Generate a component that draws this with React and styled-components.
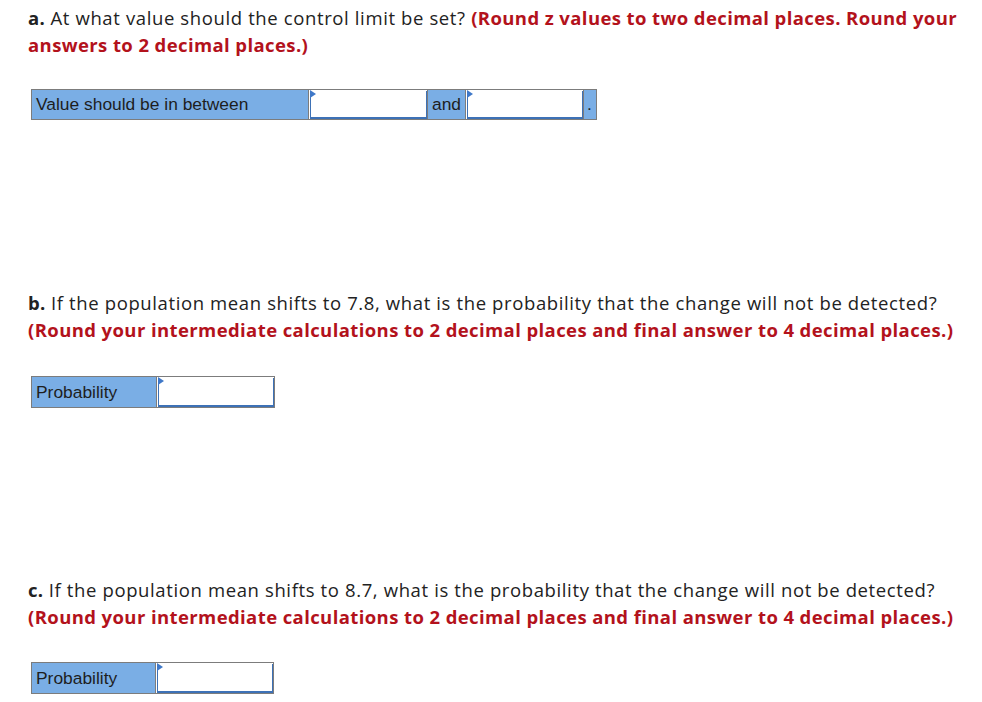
import styled, { createGlobalStyle } from "styled-components";

const GlobalStyle = createGlobalStyle`
  body {
    margin: 0;
    background: #ffffff;
  }
`;

const Page = styled.div`
  padding: 5px 0 0 28px;
  width: 954px;
`;

const Section = styled.section`
  margin-bottom: ${(p) => p.gap}px;
`;

const Question = styled.p`
  margin: 0 0 ${(p) => p.below ?? 32}px 0;
  font-family: "Open Sans", Lato, sans-serif;
  font-size: 18.5px;
  line-height: 26.5px;
  letter-spacing: 0.62px;
  color: #222222;
  white-space: nowrap;
`;

const Letter = styled.b`
  font-weight: 700;
  letter-spacing: 0.3px;
`;

const Hint = styled.span`
  font-weight: 700;
  letter-spacing: 0.4px;
  color: #b3121c;
`;

const Table = styled.div`
  display: flex;
  margin-left: 3px;
  width: max-content;
  border: 1px solid #7c7c7c;
  font-family: "Liberation Sans", Arial, sans-serif;
  font-size: 17.4px;
  color: #1e1e1e;
`;

const Label = styled.div`
  width: ${(p) => p.w}px;
  height: ${(p) => p.h ?? 29}px;
  box-sizing: border-box;
  padding: 0 ${(p) => p.pad ?? 4}px;
  display: flex;
  align-items: center;
  background: #7aaee5;
  border-left: ${(p) => (p.first ? "none" : "1px solid #7c7c7c")};
`;

const InputCell = styled.div`
  position: relative;
  width: ${(p) => p.w}px;
  box-sizing: border-box;
  border-left: 1px solid #7c7c7c;
  padding: 1px 0 0 1px;
  background: #ffffff;
`;

const Input = styled.div`
  height: 100%;
  box-sizing: border-box;
  border-style: solid;
  border-color: #3d71b6;
  border-width: 0 1px 2px 1px;
  background: #ffffff;
`;

const Flag = styled.span`
  position: absolute;
  left: 1px;
  top: 0;
  width: 0;
  height: 0;
  border-top: 4px solid transparent;
  border-bottom: 4px solid transparent;
  border-left: 6px solid #3f78c8;
`;

const Answer = ({ w }) => (
  <InputCell w={w}>
    <Flag />
    <Input />
  </InputCell>
);

export default function App() {
  return (
    <Page>
      <GlobalStyle />
      <Section gap={170}>
        <Question below={31}>
          <Letter>a.</Letter> At what value should the control limit be set?{" "}
          <Hint>
            (Round z values to two decimal places. Round your
            <br />
            answers to 2 decimal places.)
          </Hint>
        </Question>
        <Table>
          <Label w={276} first>
            Value should be in between
          </Label>
          <Answer w={119} />
          <Label w={38}>and</Label>
          <Answer w={118} />
          <Label w={13} pad={3}>.</Label>
        </Table>
      </Section>
      <Section gap={169}>
        <Question below={33}>
          <Letter>b.</Letter> If the population mean shifts to 7.8, what is
          the probability that the change will not be detected?
          <br />
          <Hint>
            (Round your intermediate calculations to 2 decimal places and final
            answer to 4 decimal places.)
          </Hint>
        </Question>
        <Table>
          <Label w={124} h={30} first>
            Probability
          </Label>
          <Answer w={118} />
        </Table>
      </Section>
      <Section gap={0}>
        <Question below={32}>
          <Letter>c.</Letter> If the population mean shifts to 8.7, what is
          the probability that the change will not be detected?
          <br />
          <Hint>
            (Round your intermediate calculations to 2 decimal places and final
            answer to 4 decimal places.)
          </Hint>
        </Question>
        <Table>
          <Label w={123} h={30} first>
            Probability
          </Label>
          <Answer w={118} />
        </Table>
      </Section>
    </Page>
  );
}
